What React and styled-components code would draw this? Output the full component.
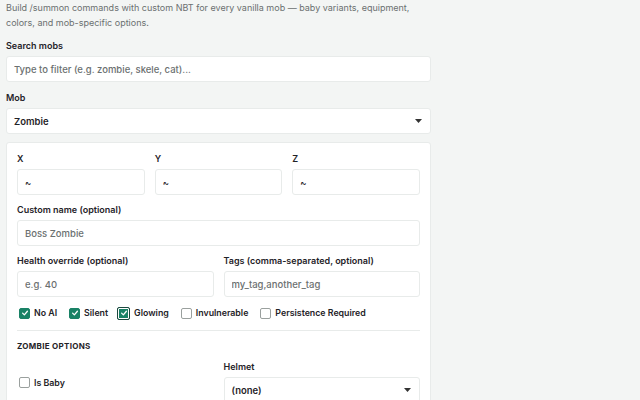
import React from "react";
import styled, { createGlobalStyle } from "styled-components";

const GlobalStyle = createGlobalStyle`
  html, body {
    margin: 0;
    padding: 0;
    background: #f3f5f4;
    font-family: Inter, "Noto Sans", sans-serif;
    color: #1f2328;
  }
`;

const flags = [
  { label: "No AI", checked: true },
  { label: "Silent", checked: true },
  { label: "Glowing", checked: true, focused: true },
  { label: "Invulnerable", checked: false },
  { label: "Persistence Required", checked: false },
];

const Check = ({ checked, focused }) => (
  <Box $checked={checked} $focused={focused}>
    {checked && (
      <svg width="8" height="8" viewBox="0 0 10 10">
        <path d="M2 5.2 L4.2 7.3 L8 2.8" fill="none" stroke="#fff" strokeWidth="1.6" strokeLinecap="round" strokeLinejoin="round" />
      </svg>
    )}
  </Box>
);

const Caret = () => (
  <svg width="7" height="4" viewBox="0 0 7 4">
    <path d="M0 0 H7 L3.5 4 Z" fill="#333" />
  </svg>
);

export default function App() {
  return (
    <Page>
      <GlobalStyle />
      <Column>
        <Intro>
          Build /summon commands with custom NBT for every vanilla mob — baby variants, equipment,
          colors, and mob-specific options.
        </Intro>

        <Field>
          <Label>Search mobs</Label>
          <Input placeholder="Type to filter (e.g. zombie, skele, cat)..." />
        </Field>

        <Field>
          <Label>Mob</Label>
          <Select>
            <span>Zombie</span>
            <Caret />
          </Select>
        </Field>

        <Card>
          <Grid $cols={3}>
            <Field>
              <Label>X</Label>
              <Input defaultValue="~" />
            </Field>
            <Field>
              <Label>Y</Label>
              <Input defaultValue="~" />
            </Field>
            <Field>
              <Label>Z</Label>
              <Input defaultValue="~" />
            </Field>
          </Grid>

          <Field>
            <Label>Custom name (optional)</Label>
            <Input placeholder="Boss Zombie" />
          </Field>

          <Grid $cols={2}>
            <Field>
              <Label>Health override (optional)</Label>
              <Input placeholder="e.g. 40" />
            </Field>
            <Field>
              <Label>Tags (comma-separated, optional)</Label>
              <Input placeholder="my_tag,another_tag" />
            </Field>
          </Grid>

          <Flags>
            {flags.map((f) => (
              <Flag key={f.label}>
                <Check checked={f.checked} focused={f.focused} />
                {f.label}
              </Flag>
            ))}
          </Flags>

          <Divider />

          <SectionTitle>Zombie options</SectionTitle>

          <Grid $cols={2} $align="center">
            <Flags>
              <Flag>
                <Check checked={false} />
                Is Baby
              </Flag>
            </Flags>
            <Field>
              <Label>Helmet</Label>
              <Select>
                <span>(none)</span>
                <Caret />
              </Select>
            </Field>
          </Grid>
        </Card>
      </Column>
    </Page>
  );
}

const Page = styled.div`
  height: 400px;
  overflow: hidden;
  padding: 0 6px;
`;

const Column = styled.div`
  width: 425px;
  display: flex;
  flex-direction: column;
  gap: 10px;
`;

const Intro = styled.p`
  width: 420px;
  margin: 0;
  font-size: 9px;
  line-height: 15px;
  color: #6b7070;
`;

const Field = styled.div`
  display: flex;
  flex-direction: column;
  gap: 4px;
`;

const Label = styled.label`
  font-size: 9px;
  line-height: 12px;
  font-weight: 600;
  color: #1f2328;
`;

const Input = styled.input`
  box-sizing: border-box;
  height: 26px;
  width: 100%;
  padding: 0 7px;
  border: 1px solid #e8ebea;
  border-radius: 3px;
  background: #fff;
  font-family: inherit;
  font-size: 9.5px;
  font-weight: 500;
  color: #1f2328;
  outline: none;
  &::placeholder {
    color: #6b7070;
  }
`;

const Select = styled.div`
  box-sizing: border-box;
  height: 26px;
  padding: 0 8px 0 7px;
  display: flex;
  align-items: center;
  justify-content: space-between;
  border: 1px solid #e8ebea;
  border-radius: 3px;
  background: #fff;
  font-size: 9.5px;
  font-weight: 600;
  color: #1f2328;
`;

const Card = styled.div`
  box-sizing: border-box;
  margin-top: -2px;
  background: #fff;
  border: 1px solid #e8ebea;
  border-radius: 3px;
  padding: 10px;
  display: flex;
  flex-direction: column;
  gap: 9px;
`;

const Grid = styled.div`
  display: grid;
  grid-template-columns: repeat(${(p) => p.$cols}, 1fr);
  gap: 10px;
  align-items: ${(p) => p.$align || "stretch"};
`;

const Flags = styled.div`
  display: flex;
  align-items: center;
  gap: 12px;
  min-height: 12px;
  padding: 1px 0 0 2px;
`;

const Flag = styled.label`
  display: flex;
  align-items: center;
  gap: 4px;
  font-size: 8.8px;
  line-height: 12px;
  font-weight: 600;
  color: #1f2328;
`;

const Box = styled.span`
  box-sizing: border-box;
  width: ${(p) => (p.$focused ? "13px" : "11px")};
  height: ${(p) => (p.$focused ? "13px" : "11px")};
  margin: ${(p) => (p.$focused ? "-1px 0 -1px -3px" : "0")};
  border-radius: 2px;
  display: inline-flex;
  align-items: center;
  justify-content: center;
  background: ${(p) => (p.$checked ? "#1a8266" : "#fff")};
  border: 1px solid
    ${(p) => (p.$focused ? "#1d4a40" : p.$checked ? "#1a8266" : "#9aa09e")};
  box-shadow: ${(p) => (p.$focused ? "inset 0 0 0 1px #fff" : "none")};
`;

const Divider = styled.hr`
  margin: 2px 0 0;
  border: none;
  border-top: 1px solid #e8ebea;
`;

const SectionTitle = styled.div`
  font-size: 8px;
  line-height: 12px;
  font-weight: 700;
  letter-spacing: 0.3px;
  text-transform: uppercase;
  color: #1f2328;
`;
